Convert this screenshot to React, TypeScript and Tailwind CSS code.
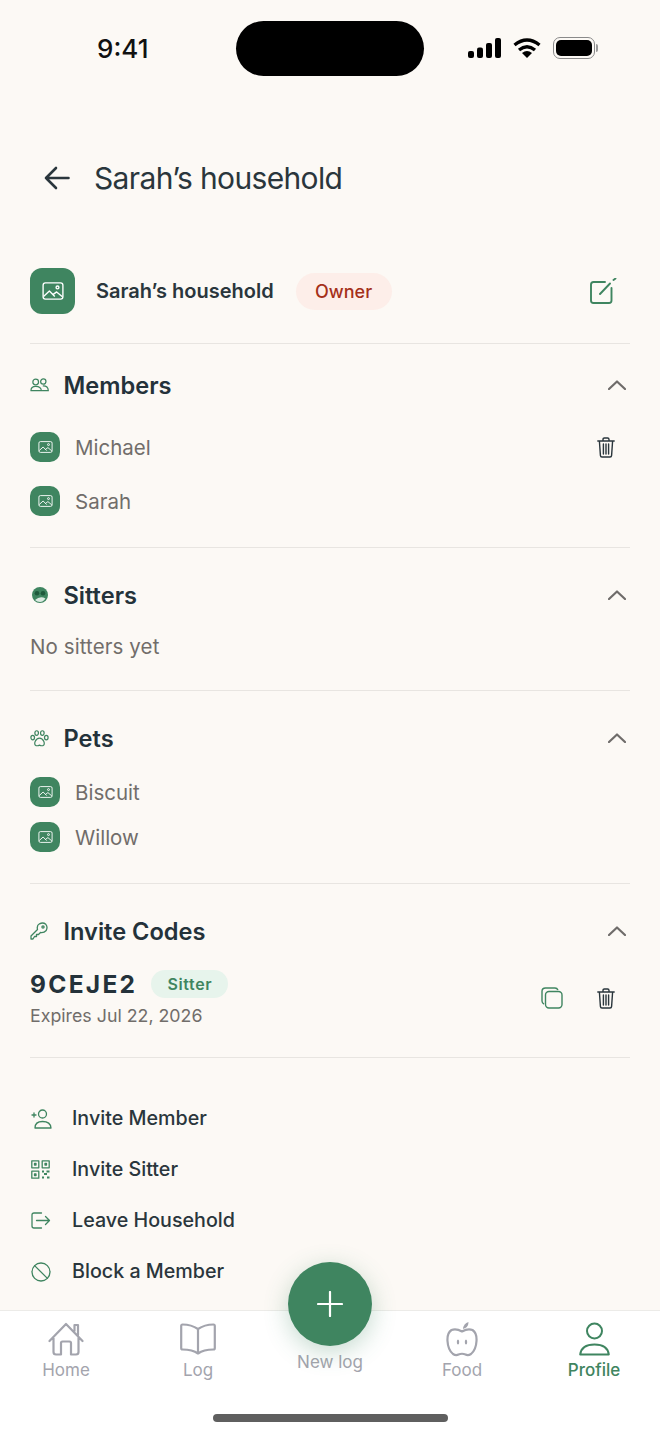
import type { ReactNode } from "react";

const font = { fontFamily: "Inter, 'Noto Sans', sans-serif" };

function ImageGlyph({ className }: { className: string }) {
  return (
    <svg viewBox="0 0 24 20" fill="none" stroke="currentColor" strokeWidth="1.5" strokeLinejoin="round" className={className}>
      <rect x="1" y="1" width="22" height="18" rx="2.5" />
      <circle cx="17" cy="6" r="1.6" />
      <path d="M1.5 16 L8 10 L14 16 M12 14 L16 11 L22.5 16.5" />
    </svg>
  );
}

function Thumb({ big }: { big?: boolean }) {
  if (big) {
    return (
      <div className="flex h-[46px] w-[45px] shrink-0 items-center justify-center rounded-[12px] bg-[#3f8560] text-white">
        <ImageGlyph className="h-[18px] w-[22px]" />
      </div>
    );
  }
  return (
    <div className="flex h-[30px] w-[30px] shrink-0 items-center justify-center rounded-[10px] bg-[#3f8560] text-white">
      <ImageGlyph className="h-[12px] w-[15px]" />
    </div>
  );
}

function Chevron() {
  return (
    <svg viewBox="0 0 18 10" fill="none" stroke="#6f6c6a" strokeWidth="2.2" strokeLinecap="round" strokeLinejoin="round" className="h-[10px] w-[18px]">
      <path d="M1 9 L9 1.5 L17 9" />
    </svg>
  );
}

function TrashIcon() {
  return (
    <svg viewBox="0 0 18 21" fill="none" stroke="#2a363c" strokeWidth="1.4" strokeLinecap="round" strokeLinejoin="round" className="h-[21px] w-[18px]">
      <path d="M0.8 4 H17.2 M6 4 V2.4 Q6 1 7.4 1 H10.6 Q12 1 12 2.4 V4 M2.4 4 L3.4 18.4 Q3.5 20 5 20 H13 Q14.5 20 14.6 18.4 L15.6 4 M6.4 7 V17 M9 7 V17 M11.6 7 V17" />
    </svg>
  );
}

function SectionHead({ icon, title }: { icon: ReactNode; title: string }) {
  return (
    <div className="flex h-[32px] items-center">
      <div className="flex w-[33.5px] items-center">{icon}</div>
      <h2 className="flex-1 pt-[1px] text-[23.6px] font-semibold text-[#24323a]">{title}</h2>
      <div className="mr-[4px]">
        <Chevron />
      </div>
    </div>
  );
}

function Person({ name, gapEnd }: { name: string; gapEnd?: ReactNode }) {
  return (
    <div className="flex items-center">
      <Thumb />
      <span className="ml-[15px] flex-1 pt-[1px] text-[20.5px] leading-[29px] text-[#716d6a]">{name}</span>
      {gapEnd}
    </div>
  );
}

const greenIcon = { fill: "none", stroke: "#3f8560", strokeWidth: 1.3, strokeLinecap: "round", strokeLinejoin: "round" } as const;

const actions: { label: string; icon: ReactNode }[] = [
  {
    label: "Invite Member",
    icon: (
      <svg viewBox="0 0 21 20" {...greenIcon} className="h-[20px] w-[21px]">
        <circle cx="11.5" cy="5" r="4" />
        <path d="M4 19 Q4 12.5 11.5 12.5 Q19.5 12.5 20 19 Z M1 6 H5 M3 4 V8" />
      </svg>
    ),
  },
  {
    label: "Invite Sitter",
    icon: (
      <svg viewBox="0 0 19 19" {...greenIcon} className="h-[19px] w-[19px]">
        <rect x="0.8" y="0.8" width="7" height="7" />
        <rect x="11.2" y="0.8" width="7" height="7" />
        <rect x="0.8" y="11.2" width="7" height="7" />
        <path d="M3.5 3.5 H5 V5 H3.5 Z M14 3.5 H15.5 V5 H14 Z M3.5 14 H5 V15.5 H3.5 Z" />
        <path strokeWidth="2" strokeLinecap="butt" d="M11 11.5 H13 M15.5 11.5 H18.5 M13 14 H16 M11 17.5 H13 M16 17.5 H18.5" />
      </svg>
    ),
  },
  {
    label: "Leave Household",
    icon: (
      <svg viewBox="0 0 20 17" {...greenIcon} className="h-[17px] w-[20px]">
        <path d="M10.5 1 H3 Q1 1 1 3 V14 Q1 16 3 16 H10.5 M5.5 8.5 H18.5 M14.5 4.5 L18.5 8.5 L14.5 12.5" />
      </svg>
    ),
  },
  {
    label: "Block a Member",
    icon: (
      <svg viewBox="0 0 20 20" {...greenIcon} className="h-[20px] w-[20px]">
        <circle cx="10" cy="10" r="9" />
        <path d="M3.6 3.6 L16.4 16.4" />
      </svg>
    ),
  },
];

const navIcon = { fill: "none", stroke: "#a3a4ad", strokeWidth: 2.2, strokeLinecap: "round", strokeLinejoin: "round" } as const;

const tabs: { label: string; icon: ReactNode; active?: boolean }[] = [
  {
    label: "Home",
    icon: (
      <svg viewBox="0 0 36 34" {...navIcon} className="h-[34px] w-[36px]">
        <path d="M1.5 19 L18 2 L34.5 19 M5.5 16 V30 Q5.5 32.5 8 32.5 H13 V21 Q13 19.5 14.5 19.5 H21.5 Q23 19.5 23 21 V32.5 H28 Q30.5 32.5 30.5 30 V16 M26.5 9 V3 H30 V13" />
      </svg>
    ),
  },
  {
    label: "Log",
    icon: (
      <svg viewBox="0 0 36 34" {...navIcon} className="h-[34px] w-[36px]">
        <path d="M18 7 Q11.5 2.5 2.5 2.5 Q1.2 2.5 1.2 4 V26 Q1.2 27.5 2.5 27.5 Q12.5 27.5 18 31.5 Q23.5 27.5 33.5 27.5 Q34.8 27.5 34.8 26 V4 Q34.8 2.5 33.5 2.5 Q24.5 2.5 18 7 Z M18 7 V31.5" />
      </svg>
    ),
  },
  { label: "New log", icon: null },
  {
    label: "Food",
    icon: (
      <svg viewBox="0 0 32 36" {...navIcon} className="h-[36px] w-[32px]">
        <path d="M16 10.5 Q10 7 5.5 9 Q1 12 1.5 20 Q2 29 7 33 Q10 35 12.5 33.5 Q16 32 19.5 33.5 Q22 35 25 33 Q30 29 30.5 20 Q31 12 26.5 9 Q22 7 16 10.5 Z" />
        <path fill="#a3a4ad" stroke="none" d="M17 8 Q17.5 2.5 22.5 1 Q22.5 6.5 17 8 Z" />
        <ellipse cx="12" cy="21" rx="1.2" ry="2.6" fill="#a3a4ad" stroke="none" />
        <ellipse cx="20" cy="21" rx="1.2" ry="2.6" fill="#a3a4ad" stroke="none" />
      </svg>
    ),
  },
  {
    label: "Profile",
    active: true,
    icon: (
      <svg viewBox="0 0 31 34" fill="none" stroke="#3f8560" strokeWidth="2" strokeLinejoin="round" className="h-[34px] w-[31px]">
        <circle cx="15.5" cy="9" r="7.5" />
        <path d="M1.2 32.5 Q2.5 22.5 15.5 22.5 Q28.5 22.5 29.8 32.5 Z" />
      </svg>
    ),
  },
];

export default function App() {
  return (
    <main style={font} className="relative flex h-[1434px] w-[660px] flex-col overflow-hidden bg-[#fcf9f5]">
      <div className="flex-1 overflow-hidden">
        {/* status bar */}
        <div className="flex h-[76px] items-start pt-[21px]">
          <div className="flex h-[55px] w-[236px] items-center pl-[97px] text-[26px] font-medium text-[#111]">9:41</div>
          <div className="h-[55px] w-[188px] rounded-full bg-black" />
          <div className="flex h-[55px] items-center pb-[1px] pl-[44px]">
            <svg viewBox="0 0 34 20" fill="#000" className="h-[20px] w-[34px]">
              <rect x="0" y="13" width="6" height="7" rx="2" />
              <rect x="9" y="9.5" width="6" height="10.5" rx="2" />
              <rect x="18" y="5" width="6" height="15" rx="2" />
              <rect x="27" y="0" width="6" height="20" rx="2" />
            </svg>
            <svg viewBox="0 0 28 20" className="ml-[11px] h-[20px] w-[28px]" fill="none" stroke="#000" strokeWidth="3.4">
              <path d="M1.5 7 Q14 -3 26.5 7 M6 12 Q14 5.5 22 12" />
              <path fill="#000" stroke="none" d="M14 20 L9 15 Q14 11 19 15 Z" />
            </svg>
            <div className="ml-[12px] flex items-center">
              <div className="h-[22px] w-[42px] rounded-[7px] border-[1.5px] border-[#8a8a8a] p-[2px]">
                <div className="h-full w-full rounded-[5px] bg-black" />
              </div>
              <div className="ml-[1px] h-[8px] w-[2px] rounded-r-sm bg-[#9a9a9a]" />
            </div>
          </div>
        </div>

        {/* title */}
        <div className="mt-[82px] flex h-[40px] items-center pl-[44px]">
          <svg viewBox="0 0 26 24" fill="none" stroke="#2a363c" strokeWidth="2.6" strokeLinecap="round" strokeLinejoin="round" className="h-[24px] w-[26px]">
            <path d="M24.5 12 H2 M12 2 L2 12 L12 22" />
          </svg>
          <h1 className="ml-[24px] text-[30px] tracking-[-0.65px] text-[#2a363c]">Sarah’s household</h1>
        </div>

        <div className="mx-[30px]">
          {/* household */}
          <div className="mt-[70px] flex items-center border-b border-[#e8e5e1] pb-[29px]">
            <Thumb big />
            <span className="ml-[21px] text-[20px] font-semibold text-[#2a363c]">Sarah’s household</span>
            <span className="ml-[22px] flex h-[37px] w-[96px] items-center justify-center rounded-full bg-[#fdeee9] text-[18px] font-medium text-[#a5301a]">Owner</span>
            <div className="ml-auto mr-[13px]">
              <svg viewBox="0 0 27 26" fill="none" stroke="#3f8560" strokeWidth="1.9" strokeLinecap="round" strokeLinejoin="round" className="h-[26px] w-[27px]">
                <path d="M15 4 H3.5 Q1 4 1 6.5 V22.5 Q1 25 3.5 25 H19 Q21.5 25 21.5 22.5 V10 M10 16 L20 5.5 M23.5 2 L25.5 0.5" />
              </svg>
            </div>
          </div>

          {/* members */}
          <section className="border-b border-[#e8e5e1] pb-[31px] pt-[25px]">
            <SectionHead
              title="Members"
              icon={
                <svg viewBox="0 0 20 14" {...greenIcon} className="h-[14px] w-[19px]">
                  <circle cx="6" cy="3.8" r="3" />
                  <circle cx="14" cy="3.4" r="2.8" />
                  <path d="M1 13 Q1 8.5 6 8.5 Q11.5 8.5 12 13 Z M14 8 Q19 8 19.3 13 H13" />
                </svg>
              }
            />
            <div className="mt-[31px] flex flex-col gap-[24px]">
              <Person
                name="Michael"
                gapEnd={
                  <div className="mr-[15px]">
                    <TrashIcon />
                  </div>
                }
              />
              <Person name="Sarah" />
            </div>
          </section>

          {/* sitters */}
          <section className="border-b border-[#e8e5e1] pb-[29px] pt-[31px]">
            <SectionHead
              title="Sitters"
              icon={
                <svg viewBox="0 0 16 16" className="ml-[2px] h-[16px] w-[16px]">
                  <circle cx="8" cy="8" r="8" fill="#3f8560" />
                  <path d="M3 13 Q8 8.5 13.5 11.5 Q11 15 8 15 Q5 15 3 13 Z" fill="#dcebe2" />
                  <circle cx="5" cy="6.2" r="2.3" fill="#1f5a3c" />
                  <circle cx="11" cy="6.2" r="2.3" fill="#1f5a3c" />
                </svg>
              }
            />
            <p className="mt-[22px] text-[20.5px] leading-[28px] tracking-[0.1px] text-[#716d6a]">No sitters yet</p>
          </section>

          {/* pets */}
          <section className="border-b border-[#e8e5e1] pb-[31px] pt-[31px]">
            <SectionHead
              title="Pets"
              icon={
                <svg viewBox="0 0 20 18" {...greenIcon} className="h-[17px] w-[19px]">
                  <ellipse cx="2.8" cy="8" rx="1.9" ry="2.4" />
                  <ellipse cx="7" cy="3.2" rx="1.9" ry="2.4" />
                  <ellipse cx="13" cy="3.2" rx="1.9" ry="2.4" />
                  <ellipse cx="17.2" cy="8" rx="1.9" ry="2.4" />
                  <path d="M10 8.5 Q7 8.5 5.5 12 Q4 15.5 6.5 16.5 Q8 17 10 16 Q12 17 13.5 16.5 Q16 15.5 14.5 12 Q13 8.5 10 8.5 Z" />
                </svg>
              }
            />
            <div className="mt-[23px] flex flex-col gap-[15px]">
              <Person name="Biscuit" />
              <Person name="Willow" />
            </div>
          </section>

          {/* invite codes */}
          <section className="border-b border-[#e8e5e1] pb-[29px] pt-[31px]">
            <SectionHead
              title="Invite Codes"
              icon={
                <svg viewBox="0 0 18 18" {...greenIcon} className="h-[18px] w-[18px]">
                  <path d="M1 17 V14 L7.5 7.5 Q6.5 3.5 9.5 1.8 Q13 0 15.8 2.3 Q18 5 16.2 8.5 Q14 11 10.5 10.5 L8.5 12.5 H6.5 V14.5 H4.5 L3 17 Z" />
                  <circle cx="13" cy="5" r="1.1" />
                </svg>
              }
            />
            <div className="mt-[23px] flex items-start">
              <div className="flex-1">
                <div className="flex h-[28px] items-center">
                  <span className="text-[24.5px] font-bold tracking-[2.3px] text-[#24323a]">9CEJE2</span>
                  <span className="ml-[14px] flex h-[28px] w-[77px] items-center justify-center rounded-full bg-[#e7f4ec] text-[16px] font-semibold tracking-[0.6px] text-[#3f8560]">Sitter</span>
                </div>
                <p className="mt-[6px] text-[17.8px] leading-[24px] text-[#716d6a]">Expires Jul 22, 2026</p>
              </div>
              <div className="mr-[15px] mt-[17px] flex items-center gap-[34px]">
                <svg viewBox="0 0 22 22" fill="none" stroke="#3f8560" strokeWidth="1.4" className="h-[22px] w-[22px]">
                  <path d="M3 17 Q1 16 1 14 V4.5 Q1 1 4.5 1 H14 Q16 1 17 3" />
                  <rect x="4.5" y="4.5" width="16.5" height="16.5" rx="3.5" />
                </svg>
                <TrashIcon />
              </div>
            </div>
          </section>

          {/* actions */}
          <div className="pt-[35px]">
            {actions.map((a) => (
              <div key={a.label} className="flex h-[51px] items-center">
                <div className="flex w-[42px] pl-[1px]">{a.icon}</div>
                <span className="text-[19.7px] font-medium text-[#2a363c]">{a.label}</span>
              </div>
            ))}
          </div>
        </div>
      </div>

      {/* tab bar */}
      <nav className="relative h-[124px] shrink-0 border-t border-[#ecebe8] bg-white">
        <div className="flex pt-[11px]">
          {tabs.map((t) =>
            t.icon ? (
              <div key={t.label} className="flex h-[59px] flex-1 flex-col items-center justify-between">
                <div className="flex h-[34px] items-center">{t.icon}</div>
                <span className={t.active ? "text-[17px] font-medium leading-[22px] text-[#3f8560]" : "text-[17px] leading-[22px] text-[#a3a4ad]"}>{t.label}</span>
              </div>
            ) : (
              <div key={t.label} className="relative flex h-[59px] flex-1 justify-center">
                <div className="absolute -top-[60px] flex h-[84px] w-[84px] items-center justify-center rounded-full bg-[#3f8560] shadow-[0_6px_24px_rgba(63,133,96,0.3)]">
                  <svg viewBox="0 0 26 26" fill="none" stroke="#fff" strokeWidth="2.2" strokeLinecap="round" className="h-[26px] w-[26px]">
                    <path d="M13 1 V25 M1 13 H25" />
                  </svg>
                </div>
                <span className="mt-[29px] text-[17px] leading-[22px] text-[#a3a4ad]">{t.label}</span>
              </div>
            ),
          )}
        </div>
        <div className="mx-auto mt-[33px] h-[8px] w-[235px] rounded-full bg-[#5f5f5f]" />
      </nav>
    </main>
  );
}
